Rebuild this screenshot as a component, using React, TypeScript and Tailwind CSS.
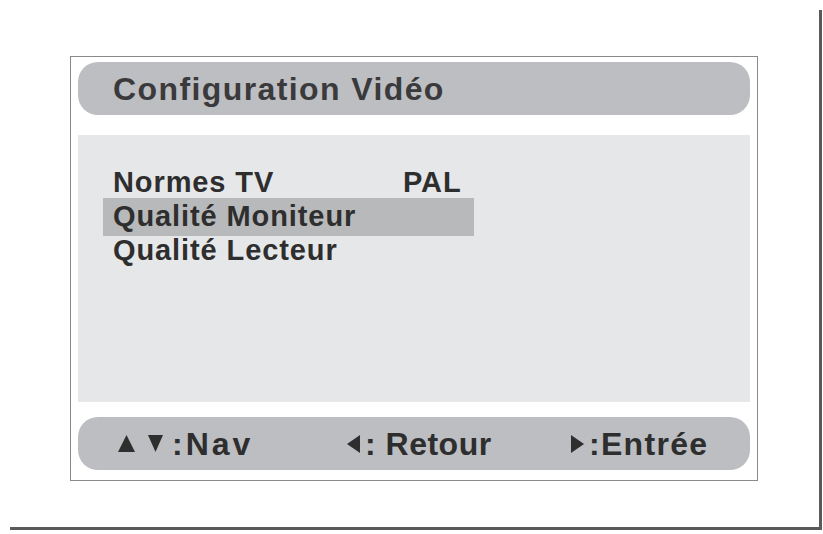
import React from "react";

const font = { fontFamily: '"Liberation Sans", Arial, sans-serif' };

function Up() {
  return (
    <svg width="17" height="17" viewBox="0 0 17 17" className="fill-[#2e2e2e]">
      <polygon points="8.5,0 17,17 0,17" />
    </svg>
  );
}

function Down() {
  return (
    <svg width="15" height="17" viewBox="0 0 15 17" className="fill-[#2e2e2e]">
      <polygon points="0,0 15,0 7.5,17" />
    </svg>
  );
}

function Left() {
  return (
    <svg width="13" height="18" viewBox="0 0 13 18" className="fill-[#2e2e2e]">
      <polygon points="13,0 13,18 0,9" />
    </svg>
  );
}

function Right() {
  return (
    <svg width="13" height="18" viewBox="0 0 13 18" className="fill-[#2e2e2e]">
      <polygon points="0,0 13,9 0,18" />
    </svg>
  );
}

const rows = [
  { label: "Normes TV", value: "PAL", active: false },
  { label: "Qualité Moniteur", value: "", active: true },
  { label: "Qualité Lecteur", value: "", active: false },
];

export default function App() {
  return (
    <div className="w-[823px] h-[534px] bg-white overflow-hidden" style={font}>
      <div className="ml-[10px] mt-[10px] w-[812px] h-[520px] border-r-[3px] border-b-[3px] border-[#5a5a5a] pl-[60px] pt-[46px]">
        {/* frame */}
        <div className="w-[688px] h-[425px] border-[1.5px] border-[#8a8a8a] pl-[7px] pt-[5px] flex flex-col">
          {/* header */}
          <div className="w-[672px] h-[53px] rounded-[20px] bg-[#bdbec1] flex items-center pl-[35px]">
            <span className="text-[32px] font-bold tracking-[1.4px] text-[#3a3a3c]">
              Configuration Vidéo
            </span>
          </div>

          {/* list panel */}
          <div className="mt-[20px] w-[672px] h-[267px] bg-[#e6e7e8] pt-[30px] pl-[25px]">
            {rows.map((r) => (
              <div
                key={r.label}
                className={
                  r.active
                    ? "w-[371px] flex pl-[10px] leading-[34px] text-[29px] font-bold tracking-[0.9px] text-[#2e2e2e] bg-[#b8b9bb] pt-[1px] pb-[3px] -mt-[1px] -mb-[3px]"
                    : "w-[371px] flex pl-[10px] leading-[34px] text-[29px] font-bold tracking-[0.9px] text-[#2e2e2e]"
                }
              >
                <span className="w-[290px]">{r.label}</span>
                <span>{r.value}</span>
              </div>
            ))}
          </div>

          {/* footer */}
          <div className="mt-[15px] w-[672px] h-[53px] rounded-[20px] bg-[#bdbec1] flex items-center pl-[40px] text-[32px] font-bold tracking-[1.3px] text-[#2e2e2e]">
            <div className="flex items-center w-[229px]">
              <Up />
              <span className="ml-[13px]">
                <Down />
              </span>
              <span className="ml-[9px] tracking-[3px]">:Nav</span>
            </div>
            <div className="flex items-center w-[224px]">
              <Left />
              <span className="ml-[5px] tracking-[0.5px]">: Retour</span>
            </div>
            <div className="flex items-center">
              <Right />
              <span className="ml-[5px]">:Entrée</span>
            </div>
          </div>
        </div>
      </div>
    </div>
  );
}
